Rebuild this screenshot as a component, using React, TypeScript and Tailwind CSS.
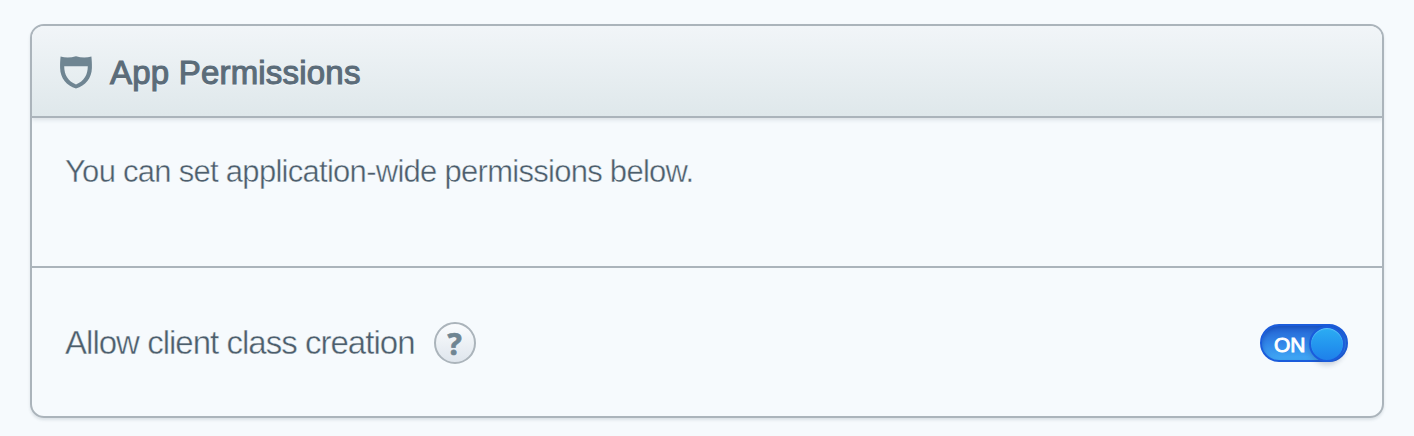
function ShieldIcon() {
  return (
    <svg width="32" height="33" viewBox="0 0 32 33" className="mt-[2px] block shrink-0" fill="#6f8592" fillRule="evenodd">
      <path d="M.6.5C5.5 2 11 1.800 16 .2C21 1.800 26.500 2 31.400.5C31.800 4 32 7.500 31.900 12C31.700 22 25.500 29.800 16 32.400C6.500 29.800.3 22 .1 12C0 7.500.2 4 .6.5ZM4.200 10.200C4.200 18.800 8 25 16 28.400C24 25 27.800 18.800 27.800 10.200Z" />
    </svg>
  );
}

function Toggle() {
  return (
    <button
      type="button"
      role="switch"
      aria-checked="true"
      className="relative flex h-[38px] w-[88px] items-center rounded-full border-2 border-[#1b5cdb] bg-linear-to-b from-[#2563d2] via-[#3185e8] to-[#42aaf5] pl-[12px] shadow-[inset_0_2px_4px_rgba(12,60,170,0.5)]"
    >
      <span className="pt-[2px] text-[21px] leading-none tracking-[-0.1px] text-white [-webkit-text-stroke:0.9px_white]">ON</span>
      <span className="absolute top-0 right-[1px] size-[36px] rounded-full border-2 border-[#1b5cdb] bg-linear-to-b from-[#2cadf3] to-[#1f80ea] shadow-[inset_0_1px_1px_rgba(120,205,255,0.7),0_3px_5px_rgba(40,60,90,0.22)]" />
    </button>
  );
}

export default function App() {
  return (
    <main className="h-[436px] bg-[#f6fafd] px-[30px] pt-[24px] font-['Liberation_Sans',Arial,sans-serif] text-[#5b6c79]">
      <section className="flex h-[394px] flex-col overflow-hidden rounded-[14px] border-2 border-[#abb4bb] shadow-[0_2px_3px_rgba(60,80,90,0.14)]">
        <header className="flex h-[92px] shrink-0 items-center border-b-2 border-[#abb4bb] bg-linear-to-b from-[#f1f5f8] to-[#dfe8eb] pl-[28px] shadow-[0_2px_4px_rgba(60,80,90,0.14)]">
          <ShieldIcon />
          <h1 className="ml-[18px] pt-[3px] text-[33px] leading-[40px] tracking-[0.2px] [-webkit-text-stroke:1.1px_#5b6c79] [text-shadow:0_2px_0_rgba(255,255,255,0.35)]">App Permissions</h1>
        </header>
        <div className="h-[150px] shrink-0 border-b-2 border-[#abb4bb] pt-[34px] pl-[33px]">
          <p className="text-[31px] leading-[40px] tracking-[-0.72px] text-[#4c5e6c] [-webkit-text-stroke:0.4px_#f6fafd]">You can set application-wide permissions below.</p>
        </div>
        <div className="flex grow items-center pr-[34px] pl-[33px]">
          <span className="pt-px text-[33px] leading-[40px] tracking-[-0.98px] text-[#4c5e6c] [-webkit-text-stroke:0.4px_#f6fafd]">Allow client class creation</span>
          <button type="button" aria-label="Help" className="mt-[2px] ml-[19px] flex size-[42px] items-center justify-center rounded-full border-2 border-[#abb4bb] bg-linear-to-b from-[#fafcfe] to-[#dfe6ed] pt-px font-['Open_Sans',sans-serif] text-[30px] leading-none font-bold text-[#6f8592] [-webkit-text-stroke:0.7px_#6f8592]">?</button>
          <div className="ml-auto pt-[2px]">
            <Toggle />
          </div>
        </div>
      </section>
    </main>
  );
}
